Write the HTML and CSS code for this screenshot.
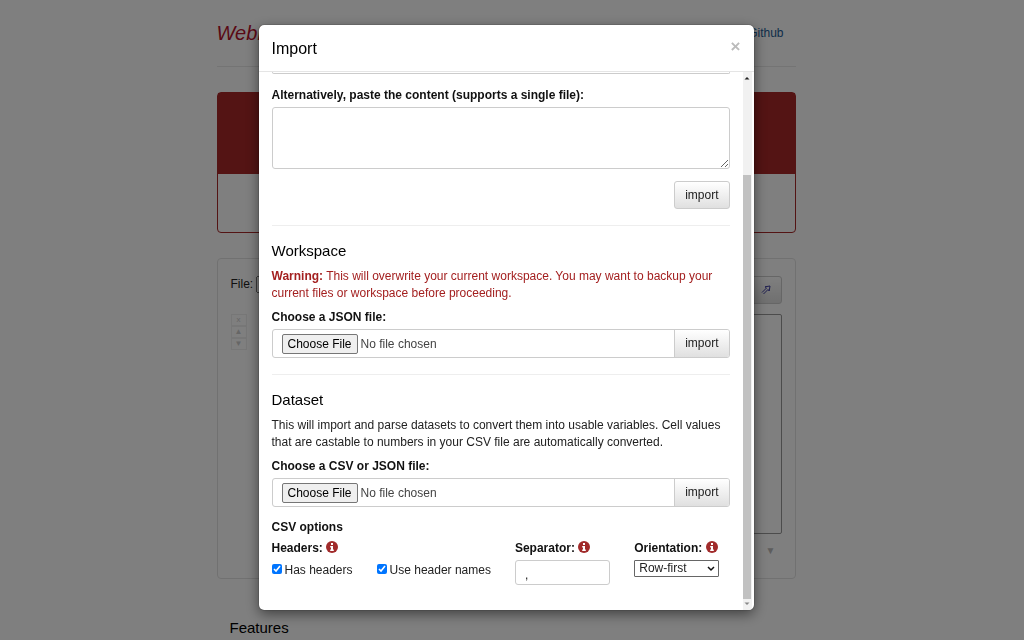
FILE: index.html
```html
<!DOCTYPE html>
<html lang="en">
<head>
    <meta charset="UTF-8">
    <meta name="viewport" content="width=device-width, initial-scale=1.0">
    <title>Import</title>
    <link rel="stylesheet" href="styles.css">
</head>
<body>
    <svg width="0" height="0" class="sprite" aria-hidden="true">
        <symbol id="info" viewBox="0 0 12 12">
            <circle cx="6" cy="6" r="6" fill="#a12b2b"/>
            <path d="M5 2h2v2H5zM4.2 5H7v3.6h.8V10H4.2V8.600H5V6.400h-.8z" fill="#fff"/>
        </symbol>
    </svg>

    <div class="page">
        <header class="topbar">
            <span class="brand">WebP</span>
            <a href="#github">Github</a>
        </header>
        <div class="banner"><div class="banner-top"></div></div>
        <main class="panel">
            <div class="toolbar">
                <label for="file">File:</label>
                <select id="file"></select>
                <button type="button" class="btn btn-open" aria-label="Open">
                    <svg width="10" height="10" viewBox="0 0 10 10"><path d="M1 7.500 5.500 3 4 1.800 9 1 8.200 6 7 4.500 2.500 9" fill="none" stroke="#3c3ca0"/></svg>
                </button>
            </div>
            <div class="editor">
                <div class="side">
                    <button type="button">x</button>
                    <button type="button">▲</button>
                    <button type="button">▼</button>
                </div>
                <div class="code"></div>
            </div>
            <div class="more">▼</div>
        </main>
        <h3 class="features">Features</h3>
    </div>

    <div class="backdrop">
        <div class="modal" role="dialog" aria-labelledby="modal-title">
            <div class="modal-header">
                <h4 id="modal-title" class="modal-title">Import</h4>
                <button type="button" class="close" aria-label="Close">×</button>
            </div>
            <div class="modal-main">
                <div class="modal-body">
                    <div class="previous"></div>
                    <label class="field-label" for="content">Alternatively, paste the content (supports a single file):</label>
                    <textarea id="content" class="form-control"></textarea>
                    <div class="actions"><button type="button" class="btn">import</button></div>
                    <hr>
                    <h4>Workspace</h4>
                    <p class="warning"><strong>Warning:</strong> This will overwrite your current workspace. You may want to backup your current files or workspace before proceeding.</p>
                    <label class="field-label" for="workspace">Choose a JSON file:</label>
                    <div class="input-group">
                        <input type="file" id="workspace">
                        <button type="button" class="btn">import</button>
                    </div>
                    <hr>
                    <h4>Dataset</h4>
                    <p>This will import and parse datasets to convert them into usable variables. Cell values that are castable to numbers in your CSV file are automatically converted.</p>
                    <label class="field-label" for="dataset">Choose a CSV or JSON file:</label>
                    <div class="input-group">
                        <input type="file" id="dataset">
                        <button type="button" class="btn">import</button>
                    </div>
                    <div class="options-title">CSV options</div>
                    <div class="options">
                        <div class="option">
                            <div class="option-label">Headers: <svg class="info"><use href="#info"/></svg></div>
                            <div class="checks">
                                <label><input type="checkbox" checked>Has headers</label>
                                <label><input type="checkbox" checked>Use header names</label>
                            </div>
                        </div>
                        <div class="option">
                            <label class="option-label" for="separator">Separator: <svg class="info"><use href="#info"/></svg></label>
                            <input type="text" id="separator" class="form-control" value=",">
                        </div>
                        <div class="option">
                            <label class="option-label" for="orientation">Orientation: <svg class="info"><use href="#info"/></svg></label>
                            <div class="select">
                                <select id="orientation"><option>Row-first</option></select>
                                <svg width="8" height="6" viewBox="0 0 8 6"><path d="M1 1l3 3 3-3" fill="none" stroke="#111" stroke-width="1.500"/></svg>
                            </div>
                        </div>
                    </div>
                </div>
                <div class="scrollbar">
                    <svg width="6" height="4" viewBox="0 0 6 4"><path d="M.5 3.500 3 1l2.500 2.500z" fill="#222"/></svg>
                    <div class="thumb"></div>
                    <svg width="6" height="4" viewBox="0 0 6 4"><path d="M.5 .5h5L3 3z" fill="#888"/></svg>
                </div>
            </div>
        </div>
    </div>
</body>
</html>
```
FILE: styles.css
```css
* {
    box-sizing: border-box;
}
body {
    margin: 0;
    padding-right: 12px;
    height: 100vh;
    overflow: hidden;
    background: #fff;
    color: #222;
    font-family: "Liberation Sans", Arial, sans-serif;
    font-size: 12px;
    line-height: 17px;
}
button, input, select, textarea {
    font: inherit;
    color: inherit;
}
h3, h4, p {
    margin: 0;
}
h3, h4 {
    font-size: 15px;
    font-weight: normal;
    color: #000;
}
.sprite {
    position: absolute;
}

/* page */
.page {
    max-width: 579px;
    margin: 0 auto;
}
.topbar {
    display: flex;
    justify-content: space-between;
    align-items: center;
    height: 67px;
    padding-right: 12px;
    border-bottom: 1px solid #e8e8e8;
}
.brand {
    font-size: 20px;
    font-style: italic;
    color: #b5122b;
}
.topbar a {
    color: #1d5c94;
    text-decoration: none;
}
.banner {
    height: 141px;
    margin: 25px 0;
    border: 1px solid #a82828;
    border-radius: 4px;
}
.banner-top {
    height: 81px;
    background: #a82828;
}
.panel {
    height: 321px;
    padding: 17px 13px;
    border: 1px solid #e3e3e3;
    border-radius: 4px;
}
.toolbar {
    display: flex;
    align-items: flex-start;
    gap: 3px;
}
.toolbar select {
    width: 20px;
    height: 17px;
}
.btn-open {
    margin-left: auto;
}
.btn-open svg {
    display: block;
}
.editor {
    display: flex;
    gap: 12px;
    margin-top: 10px;
}
.side {
    width: 16px;
}
.side button {
    display: block;
    width: 16px;
    height: 12px;
    padding: 0;
    border: 1px solid #eee;
    background: none;
    color: #ccc;
    font-size: 8px;
    line-height: 10px;
}
.code {
    flex: 1;
    height: 220px;
    border: 1px solid #999;
    border-radius: 2px;
}
.more {
    padding: 8px 6px;
    text-align: right;
    color: #bbb;
    font-size: 10px;
}
.features {
    margin: 40px 13px 0;
}

/* shared controls */
.btn {
    height: 28px;
    padding: 0 10px;
    border: 1px solid #ccc;
    border-radius: 3px;
    background: linear-gradient(#fff, #e0e0e0);
}
.form-control {
    display: block;
    width: 100%;
    border: 1px solid #ccc;
    border-radius: 3px;
    background: #fff;
}

/* modal */
.backdrop {
    position: fixed;
    inset: 0;
    padding: 25px 12px 30px 0;
    display: flex;
    justify-content: center;
    background: rgba(0, 0, 0, 0.5);
}
.modal {
    display: flex;
    flex-direction: column;
    width: 100%;
    max-width: 495px;
    overflow: hidden;
    border-radius: 5px;
    background: #fff;
    box-shadow: 0 4px 13px rgba(0, 0, 0, 0.5), 0 0 1px #000;
}
.modal-header {
    display: flex;
    align-items: center;
    justify-content: space-between;
    height: 47px;
    flex: none;
    padding: 0 13px;
    border-bottom: 1px solid #e5e5e5;
}
.modal-title {
    font-size: 16px;
}
.close {
    padding: 0 0 4px;
    border: 0;
    background: none;
    color: #bbb;
    font-size: 17px;
    font-weight: bold;
}
.modal-main {
    display: flex;
    flex: 1;
    min-height: 0;
}
.modal-body {
    flex: 1;
    padding: 0 13px;
    overflow: hidden;
}
.previous {
    height: 2px;
    margin-bottom: 13px;
    border: 1px solid #ccc;
    border-top: 0;
    border-radius: 0 0 3px 3px;
}
.field-label {
    display: block;
    margin-bottom: 3px;
    font-weight: bold;
    color: #111;
}
textarea.form-control {
    height: 62px;
}
.actions {
    margin-top: 12px;
    text-align: right;
}
.actions .btn {
    display: inline-block;
    vertical-align: top;
}
hr {
    margin: 16px 0;
    border: 0;
    border-top: 1px solid #eee;
}
.modal-body p {
    margin: 9px 0 7px;
}
.modal-body .warning {
    color: #a31f1f;
}
.input-group {
    display: flex;
    height: 29px;
    border: 1px solid #ccc;
    border-radius: 3px;
}
.input-group input {
    flex: 1;
    min-width: 0;
    padding: 4px 9px;
    color: #444;
}
.input-group input::file-selector-button {
    height: 20px;
    margin: 0 3px 0 0;
    padding: 0 5px;
    border: 1px solid #767676;
    border-radius: 2px;
    background: #efefef;
    color: #000;
    font: inherit;
}
.input-group .btn {
    height: 27px;
    border-width: 0 0 0 1px;
    border-radius: 0 2px 2px 0;
}
.options-title {
    margin: 12px 0 4px;
    font-weight: bold;
    color: #111;
}
.options {
    display: grid;
    grid-template-columns: 2fr 1fr 1fr;
    margin: 0 -12px;
}
.option {
    padding: 0 12px;
}
.option-label {
    display: block;
    margin-bottom: 3px;
    font-weight: bold;
    color: #111;
    white-space: nowrap;
}
.info {
    width: 12px;
    height: 12px;
    vertical-align: -1px;
}
.checks {
    display: flex;
    gap: 24px;
    padding-top: 2px;
}
.checks label {
    display: flex;
    gap: 3px;
    white-space: nowrap;
}
.checks input {
    width: 10px;
    height: 10px;
    margin: 2px 0 0;
}
#separator {
    height: 25px;
    padding: 5px 9px 0;
}
.select {
    display: flex;
    align-items: center;
    width: 85px;
}
.select select {
    appearance: none;
    width: 100%;
    height: 17px;
    padding: 0 4px;
    border: 1px solid #666;
    border-radius: 1px;
    background: #fff;
    line-height: 15px;
}
.select svg {
    flex: none;
    margin-left: -12px;
}
.scrollbar {
    display: flex;
    flex-direction: column;
    align-items: center;
    width: 9px;
    margin-right: 2px;
    padding: 4px 0;
    background: #f1f1f1;
}
.thumb {
    flex: 1;
    width: 8px;
    margin: 95px 0 3px;
    background: #c1c1c1;
}
```
